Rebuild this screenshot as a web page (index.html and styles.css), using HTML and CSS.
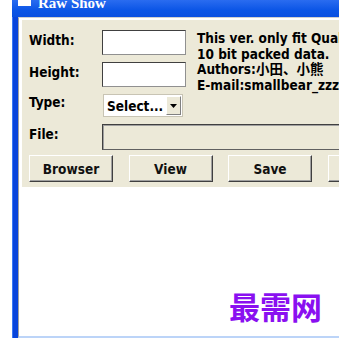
FILE: index.html
```html
<!DOCTYPE html>
<html>
<head>
<meta charset="utf-8">
<link rel="stylesheet" href="styles.css">
</head>
<body>
<div class="window">
  <div class="titlebar">
    <span class="ticon"></span>
    <span class="ttext">Raw Show</span>
  </div>
  <div class="client">
    <div class="panel">
      <div class="form">
        <div class="label">Width:</div>
        <input class="field" type="text">
        <div class="info">This ver. only fit Qualcomm<br>10 bit packed data.<br>Authors:小田、小熊<br>E-mail:smallbear_zzz@163.com</div>
        <div class="label">Height:</div>
        <input class="field" type="text">
        <div class="label label-type">Type:</div>
        <div class="select"><span class="seltext">Select...</span><span class="selbtn"><svg width="7" height="4" viewBox="0 0 7 4"><path d="M0 0H7L3.5 4Z" fill="#000"/></svg></span></div>
        <div class="label">File:</div>
        <div class="file"></div>
      </div>
      <div class="buttons">
        <button class="btn">Browser</button>
        <button class="btn">View</button>
        <button class="btn">Save</button>
        <button class="btn">Exit</button>
      </div>
    </div>
    <div class="watermark">最需网</div>
  </div>
</div>
</body>
</html>
```
FILE: styles.css
```css
html, body {
  margin: 0;
  padding: 0;
  height: 100%;
  overflow: hidden;
  background: #fff;
}
body {
  font-family: "DejaVu Sans Condensed", "DejaVu Sans", "Noto Sans CJK SC", sans-serif;
}
.window {
  margin-left: 12px;
  width: 420px;
  height: 338px;
  display: flex;
  flex-direction: column;
  background: #0845dc;
  box-shadow: inset 1px 0 #3a78f2;
}
.titlebar {
  height: 17px;
  flex: none;
  display: flex;
  align-items: flex-start;
  overflow: hidden;
  background: linear-gradient(#2a6cf0, #0b55e6 60%, #0a4fe0);
}
.ticon {
  width: 13px;
  height: 6px;
  margin-left: 6px;
  background: #fff;
  flex: none;
}
.ttext {
  margin-left: 7px;
  margin-top: -4px;
  font: bold 15px/15px "Liberation Serif", serif;
  color: #fff;
}
.client {
  flex: 1;
  margin-left: 6px;
  background: #fff;
  border-left: 1px solid #a0a0a0;
  border-top: 1px solid #d0d0d0;
  border-bottom: 2px solid #bcd4f8;
  padding: 2px 0 0 3px;
  display: flex;
  flex-direction: column;
}
.panel {
  background: #ece9d8;
  height: 167px;
  box-sizing: border-box;
  padding: 10px 0 0 7px;
}
.form {
  display: grid;
  grid-template-columns: 73px 84px 1fr;
  grid-template-rows: 25px 25px 23px 26px;
  row-gap: 7px;
}
.label {
  align-self: start;
  padding-top: 2px;
  font-weight: bold;
  font-size: 13.5px;
  color: #000;
}
.label-type {
  padding-top: 0;
}
.field {
  margin: 0;
  padding: 0;
  box-sizing: border-box;
  width: 84px;
  height: 25px;
  background: #fff;
  border: 1px solid;
  border-color: #404040 #909090 #909090 #404040;
  outline: none;
}
.info {
  grid-column: 3;
  grid-row: 1 / span 3;
  padding-left: 11px;
  margin-top: 1px;
  font-weight: bold;
  font-size: 13.5px;
  line-height: 15.7px;
  white-space: nowrap;
  color: #000;
}
.select {
  margin-left: 1px;
  width: 80px;
  height: 23px;
  box-sizing: border-box;
  background: #fff;
  border: 1px solid #c8c4b4;
  display: flex;
  align-items: center;
}
.seltext {
  flex: 1;
  padding-left: 3px;
  font-weight: bold;
  font-size: 13.5px;
  color: #000;
}
.selbtn {
  width: 15px;
  height: 19px;
  margin-right: 1px;
  box-sizing: border-box;
  background: #ece9d8;
  border: 1px solid;
  border-color: #fff #808080 #808080 #fff;
  display: flex;
  align-items: center;
  justify-content: center;
}
.file {
  grid-column: 2 / -1;
  box-sizing: border-box;
  height: 26px;
  background: #ece9d8;
  border: 1px solid;
  border-color: #404040 #909090 #606060 #404040;
  box-shadow: inset 1px 1px #a0a0a0;
}
.buttons {
  display: flex;
  gap: 15.5px;
  margin-top: 5px;
}
.btn {
  flex: none;
  width: 84px;
  height: 27px;
  margin: 0;
  padding: 0;
  box-sizing: border-box;
  background: #ece9d8;
  border: 1px solid;
  border-color: #fff #404040 #404040 #fff;
  box-shadow: inset -1px -1px #a0a0a0;
  font-family: "DejaVu Sans Condensed", "DejaVu Sans", sans-serif;
  font-weight: bold;
  font-size: 13.5px;
  color: #111;
}
.watermark {
  margin: 104px 0 0 207px;
  font-family: "Noto Sans CJK SC", sans-serif;
  font-weight: bold;
  font-size: 31px;
  line-height: 30px;
  color: #8a10f0;
  white-space: nowrap;
}
```
